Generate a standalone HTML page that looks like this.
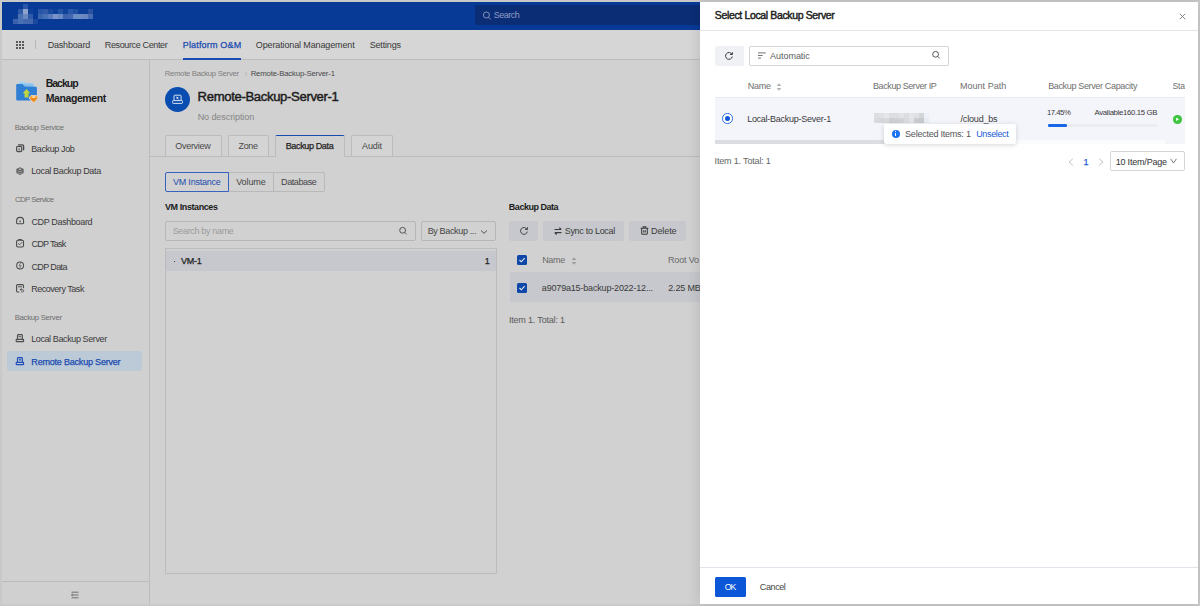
<!DOCTYPE html>
<html lang="en"><head><meta charset="utf-8"><title>Select Local Backup Server</title>
<style>
*{box-sizing:border-box;margin:0;padding:0}
html,body{width:1200px;height:606px;overflow:hidden}
body{background:#c9c9c9;font-family:"Liberation Sans",sans-serif;position:relative}
.a{position:absolute}
.t{position:absolute;white-space:nowrap}
#app{position:absolute;left:2px;top:2px;width:1196px;height:602px;overflow:hidden;background:#d1d1d1}
/* coordinates inside #app are offset by -2; we instead use a wrapper shifted back */
#page{position:absolute;left:0;top:0;width:1200px;height:606px}
#topbar{left:2px;top:2px;width:1196px;height:28px;background:#063a96}
#tsearch{left:475px;top:5px;width:240px;height:19.5px;background:#0a2d76;border-radius:2px}
#nav{left:2px;top:30px;width:1196px;height:30px;background:#d6d6d6;border-bottom:1px solid #bdbdbd}
#side{left:2px;top:60px;width:148px;height:544px;background:#d0d0d0;border-right:1px solid #bcbcbc}
#sidefoot{left:2px;top:581px;width:147px;height:1px;background:#bcbcbc}
#sel{left:7.4px;top:351.3px;width:135px;height:20px;background:#bccad7;border-radius:2px}
.tab{border:1px solid #bcbcbc;border-bottom:none;background:#d4d4d4;border-radius:2px 2px 0 0;top:135px;height:21px}
#modal{left:700px;top:2px;width:498px;height:602px;background:#fff;box-shadow:-2px 0 12px rgba(0,0,0,0.11)}
.btn{background:#c6c8cd;border-radius:2px}
.cb{width:10px;height:10px;background:#0f47a8;border-radius:1.5px}

</style></head>
<body>
<div id="page">
<!-- ===== underlying (dimmed) page ===== -->
<div class="a" id="topbar"></div>
<svg class="a" style="left:13px;top:4px" width="85" height="20" viewBox="0 0 85 20" shape-rendering="crispEdges">
<rect x="10" y="0" width="5" height="5" fill="#2a56a8"/><rect x="5" y="5" width="5" height="5" fill="#2f5aa8"/><rect x="10" y="5" width="5" height="5" fill="#8ea3cc"/><rect x="15" y="5" width="5" height="5" fill="#0f409a"/><rect x="0" y="10" width="5" height="5" fill="#0a3c96"/><rect x="5" y="10" width="5" height="5" fill="#4a70b4"/><rect x="10" y="10" width="5" height="5" fill="#6a88c0"/><rect x="15" y="10" width="5" height="5" fill="#2f5aa8"/><rect x="0" y="15" width="5" height="5" fill="#3a62ae"/><rect x="5" y="15" width="5" height="5" fill="#4a70b4"/><rect x="10" y="15" width="5" height="5" fill="#4468b0"/><rect x="15" y="15" width="5" height="5" fill="#4468b0"/><rect x="20" y="15" width="5" height="5" fill="#1a489e"/><rect x="25" y="5" width="5" height="5" fill="#2756a6"/><rect x="30" y="5" width="5" height="5" fill="#305aa8"/><rect x="35" y="5" width="5" height="5" fill="#1a4aa0"/><rect x="40" y="5" width="5" height="5" fill="#0d3f99"/><rect x="45" y="5" width="5" height="5" fill="#2253a4"/><rect x="50" y="5" width="5" height="5" fill="#0f409a"/><rect x="55" y="5" width="5" height="5" fill="#2a58a8"/><rect x="60" y="5" width="5" height="5" fill="#2050a2"/><rect x="65" y="5" width="5" height="5" fill="#0d3f98"/><rect x="70" y="5" width="5" height="5" fill="#0d3f98"/><rect x="75" y="5" width="5" height="5" fill="#2a50a0"/><rect x="25" y="10" width="5" height="5" fill="#3a66b0"/><rect x="30" y="10" width="5" height="5" fill="#4870b4"/><rect x="35" y="10" width="5" height="5" fill="#5a7cbc"/><rect x="40" y="10" width="5" height="5" fill="#7a94c8"/><rect x="45" y="10" width="5" height="5" fill="#6a88c2"/><rect x="50" y="10" width="5" height="5" fill="#3a62ae"/><rect x="55" y="10" width="5" height="5" fill="#4068b0"/><rect x="60" y="10" width="5" height="5" fill="#6a8cc2"/><rect x="65" y="10" width="5" height="5" fill="#6c8cc4"/><rect x="70" y="10" width="5" height="5" fill="#6a86c0"/><rect x="75" y="10" width="5" height="5" fill="#4a6cb4"/>
</svg>
<div class="a" id="tsearch"></div>
<svg class="a" style="left:482px;top:11px" width="10" height="10" viewBox="0 0 10 10" fill="none" stroke="#8f9dc4" stroke-width="0.9"><circle cx="4.4" cy="4" r="3"/><path d="M6.6 6.3 L8.8 8.5"/></svg>

<div class="a" id="nav"></div>
<svg class="a" style="left:16px;top:41px" width="8" height="8" viewBox="0 0 8 8" fill="#5a5a5a" shape-rendering="crispEdges"><rect x="0" y="0" width="2" height="2"/><rect x="3" y="0" width="2" height="2"/><rect x="6" y="0" width="2" height="2"/><rect x="0" y="3" width="2" height="2"/><rect x="3" y="3" width="2" height="2"/><rect x="6" y="3" width="2" height="2"/><rect x="0" y="6" width="2" height="2"/><rect x="3" y="6" width="2" height="2"/><rect x="6" y="6" width="2" height="2"/></svg>
<div class="a" style="left:35px;top:40px;width:1px;height:9px;background:#b8b8b8"></div>
<div class="a" style="left:183px;top:58.1px;width:58px;height:1.6px;background:#1a4db4"></div>

<div class="a" style="left:150px;top:60px;width:1048px;height:544px;background:#d1d1d1"></div>
<div class="a" id="side"></div>
<div class="a" id="sidefoot"></div>
<div class="a" id="sel"></div>
<!-- folder icon -->
<svg class="a" style="left:14px;top:79px" width="26" height="26" viewBox="14 79 26 26">
<defs><linearGradient id="fb" x1="0" y1="0" x2="0" y2="1"><stop offset="0" stop-color="#b4daf2"/><stop offset="1" stop-color="#62aae4"/></linearGradient><linearGradient id="ar" x1="0" y1="0" x2="1" y2="0"><stop offset="0" stop-color="#d8de3e"/><stop offset="1" stop-color="#a4c83e"/></linearGradient></defs>
<path d="M19 82.2 Q19 81.2 20 81.2 H24.2 L26 83 H32.6 Q33.6 83 33.6 84 V88.5 H19 Z" fill="url(#fb)"/>
<path d="M16.2 85 Q16.2 84 17.2 84 H22.4 L25 86.8 H36 Q36.9 86.8 36.9 87.8 V99.5 Q36.9 100.5 35.9 100.5 H17.2 Q16.2 100.5 16.2 99.5 Z" fill="#2f7fd5"/>
<path d="M26.6 88.9 L30.4 93.2 H28.6 V97.6 H24.6 V93.2 H22.8 Z" fill="url(#ar)"/>
<path d="M31 95.5 H36.3 L38.3 98 L33.65 103 L29 98 Z" fill="#ee8a1c" stroke="#ece2d6" stroke-width="0.9"/>
<path d="M31.1 95.7 H36.2 L38 98 H29.3 Z" fill="#f5a840"/>
<ellipse cx="33.65" cy="97.1" rx="1.7" ry="0.8" fill="#fdeacc"/>
</svg>
<svg class="a" style="left:0;top:0" width="150" height="606" viewBox="0 0 150 606" fill="none" stroke="#4c4c4c" stroke-linecap="round" stroke-linejoin="round">
<g stroke-width="1.2"><rect x="16.6" y="146.4" width="5.2" height="5.2" rx="1.3"/><path d="M18.7 144.9 H22.4 Q23.6 144.9 23.6 146.1 V149.8" stroke-width="1.4"/><path d="M19.2 148.1 V149.7 M18.4 149.8 H20" stroke-width="0.6"/></g>
<g><path d="M20 167.2 L23.6 169 V173 L20 174.9 L16.4 173 V169 Z" fill="#565656" stroke="none"/><path d="M20 168.3 L22.1 169.3 L20 170.3 L17.9 169.3 Z" fill="#d0d0d0" stroke="none" opacity="0.75"/><path d="M17.7 171 Q20 172.4 22.3 171 M17.7 172.9 Q20 174.2 22.3 172.9" stroke="#d0d0d0" stroke-width="0.7" opacity="0.85"/></g>
<g stroke-width="1.1"><path d="M16.6 223.1 V220.9 A3.5 3.5 0 0 1 23.6 220.9 V223.1 Q23.6 223.7 23 223.7 H17.2 Q16.6 223.7 16.6 223.1 Z"/><circle cx="20.1" cy="221.4" r="0.8" fill="#4c4c4c" stroke="none"/></g>
<g stroke-width="1.1"><rect x="16.6" y="240.3" width="6.9" height="6.7" rx="1.2"/><path d="M18.6 240.2 V239.5 H21.5 V240.2" stroke-width="1"/><path d="M18.3 243.6 L19.6 244.8 L21.8 242.5" stroke-width="0.9"/></g>
<g stroke-width="1.05"><circle cx="20.1" cy="265.55" r="3.45"/><path d="M20.6 263.2 L19 265.7 H21.2 L19.6 268" stroke-width="0.7"/></g>
<g stroke-width="1.1"><path d="M23.5 287.6 V285.7 Q23.5 284.6 22.4 284.6 H17.7 Q16.6 284.6 16.6 285.7 V290.9 Q16.6 292 17.7 292 H19"/><path d="M18.4 286.8 H21.7" stroke-width="0.9"/><path d="M20.3 289.6 H22.6 Q23.7 289.6 23.7 290.7 Q23.7 291.9 22.6 291.9 H21.6 M21.4 288.5 L20.2 289.6 L21.4 290.7" stroke-width="0.85"/></g>
<g stroke="#4c4c4c" fill="none" stroke-width="1.15"><path d="M17.5 339.3 V335.4 Q17.5 334.6 18.3 334.6 H21.5 Q22.3 334.6 22.3 335.4 V339.3"/><rect x="16.2" y="339.3" width="7.4" height="2.3" rx="0.7"/><path d="M19 336.7 H20.8" stroke-width="0.9"/></g>
<g stroke="#1a4bb8" fill="none" stroke-width="1.15"><path d="M17.5 362.3 V358.4 Q17.5 357.6 18.3 357.6 H21.5 Q22.3 357.6 22.3 358.4 V362.3"/><rect x="16.2" y="362.3" width="7.4" height="2.3" rx="0.7"/><rect x="19.1" y="358.9" width="1.7" height="1.7" fill="#1a4bb8" stroke="none"/></g>
</svg>
<!-- collapse icon -->
<svg class="a" style="left:71px;top:591px" width="8" height="8" viewBox="0 0 8 8" stroke="#666" stroke-width="0.9" fill="none"><path d="M0.5 1.2 H7.5 M0.5 4 H7.5 M0.5 6.8 H7.5 M1.8 2.9 L0.5 4 L1.8 5.1"/></svg>

<!-- main content -->
<svg class="a" style="left:243.5px;top:70.5px" width="4" height="6" viewBox="0 0 4 6" fill="none" stroke="#adadad" stroke-width="0.7"><path d="M1 0.8 L3 3 L1 5.2"/></svg>
<div class="a" style="left:165px;top:86.5px;width:25px;height:25px;border-radius:50%;background:#0a4db0"></div>
<svg class="a" style="left:170px;top:92px" width="16" height="14" viewBox="170 92 16 14" fill="none" stroke="#d6e0f2" stroke-width="1" stroke-linejoin="round"><path d="M174 100.6 V96 Q174 95.2 174.8 95.2 H180.3 Q181.1 95.2 181.1 96 V100.6"/><rect x="172.6" y="100.6" width="9.9" height="2.8" rx="0.7"/><path d="M176.3 96.6 L179 97.6 L177.9 98.1 L178.9 99.4 L178.3 99.8 L177.3 98.5 L176.6 99.3 Z" fill="#d6e0f2" stroke="none"/></svg>

<div class="a" style="left:150px;top:156px;width:550px;height:1px;background:#bcbcbc"></div>
<div class="a tab" style="left:165px;width:57px"></div>
<div class="a tab" style="left:228px;width:40.5px"></div>
<div class="a tab" style="left:351px;width:41.5px"></div>
<div class="a" style="left:275px;top:135px;width:70px;height:22px;background:#d1d1d1;border:1px solid #bcbcbc;border-bottom:none;border-top:1.6px solid #174bb0;border-radius:2px 2px 0 0"></div>

<!-- segmented -->
<div class="a" style="left:229px;top:172px;width:96px;height:20px;border:1px solid #b9b9b9;border-left:none;border-radius:0 2px 2px 0"></div>
<div class="a" style="left:273px;top:172px;width:1px;height:20px;background:#b9b9b9"></div>
<div class="a" style="left:165px;top:172px;width:64px;height:20px;border:1px solid #3763bd;border-radius:2px 0 0 2px"></div>

<!-- VM instances -->
<div class="a" style="left:165px;top:221px;width:251px;height:20px;border:1px solid #b6b6b6;border-radius:2px"></div>
<svg class="a" style="left:398px;top:226px" width="10" height="10" viewBox="0 0 10 10" fill="none" stroke="#444" stroke-width="0.9"><circle cx="4.6" cy="4.3" r="2.9"/><path d="M6.7 6.4 L8.6 8.3"/></svg>
<div class="a" style="left:420.5px;top:221px;width:75.5px;height:20px;border:1px solid #b6b6b6;border-radius:2px"></div>
<svg class="a" style="left:480px;top:228.5px" width="8" height="6" viewBox="0 0 8 6" fill="none" stroke="#444" stroke-width="0.9"><path d="M1 1.5 L4 4.3 L7 1.5"/></svg>
<div class="a" style="left:165px;top:248px;width:332px;height:326px;border:1px solid #bcbcbc"></div>
<div class="a" style="left:166px;top:251px;width:330px;height:20.3px;background:#c6c8cd"></div>
<div class="a" style="left:173.5px;top:260.5px;width:1.2px;height:1.2px;background:#444"></div>

<!-- backup data -->
<div class="a btn" style="left:509.3px;top:221px;width:28.6px;height:19.6px"></div>
<svg class="a" style="left:519px;top:226px" width="10" height="10" viewBox="0 0 10 10" fill="none" stroke="#3a3a3a" stroke-width="0.95"><path d="M7.9 3.2 A3.4 3.4 0 1 0 8.3 5.6"/><path d="M8.4 1.2 V3.5 H6.1" stroke-linejoin="miter"/></svg>
<div class="a btn" style="left:543px;top:221px;width:80.8px;height:19.6px"></div>
<svg class="a" style="left:553.5px;top:226.5px" width="8" height="8" viewBox="0 0 8 8" fill="none" stroke="#3a3a3a" stroke-width="1.1"><path d="M0.5 2.5 H7.3 M5.3 0.6 L7.3 2.5 M7.5 5.6 H0.7 M2.7 7.5 L0.7 5.6"/></svg>
<div class="a btn" style="left:629.3px;top:221px;width:56.3px;height:19.6px"></div>
<svg class="a" style="left:639.5px;top:226px" width="9" height="9" viewBox="0 0 9 9" fill="none" stroke="#3a3a3a" stroke-width="1.05"><path d="M0.6 2.3 H8.4 M3.2 2.2 V0.8 H5.8 V2.2 M1.7 2.5 V7.4 Q1.7 8.3 2.6 8.3 H6.4 Q7.3 8.3 7.3 7.4 V2.5 M3.7 4.2 V6.5 M5.3 4.2 V6.5"/></svg>

<div class="a" style="left:509.5px;top:272.3px;width:191px;height:30.2px;background:#c6c8cd"></div>
<div class="a cb" style="left:517.3px;top:255.3px"></div>
<div class="a cb" style="left:517.3px;top:282.8px"></div>
<svg class="a" style="left:517.3px;top:255.3px" width="10" height="10" viewBox="0 0 10 10" fill="none" stroke="#e4e9f4" stroke-width="1.1"><path d="M2.5 5 L4.3 6.8 L7.6 3.2"/></svg>
<svg class="a" style="left:517.3px;top:282.8px" width="10" height="10" viewBox="0 0 10 10" fill="none" stroke="#e4e9f4" stroke-width="1.1"><path d="M2.5 5 L4.3 6.8 L7.6 3.2"/></svg>
<svg class="a" style="left:570.5px;top:257px" width="6" height="8" viewBox="0 0 6 8"><path d="M3 0.3 L5.3 3 H0.7 Z" fill="#9a9a9a"/><path d="M3 7.7 L5.3 5 H0.7 Z" fill="#9a9a9a"/></svg>

<span class="t" style="left:47.65px;top:39px;font-size:9.03px;line-height:13px;letter-spacing:-0.185px;color:#383838;">Dashboard</span>
<span class="t" style="left:104.74px;top:39px;font-size:9.03px;line-height:13px;letter-spacing:-0.367px;color:#383838;">Resource Center</span>
<span class="t" style="left:182.72px;top:39px;font-size:9.03px;line-height:13px;letter-spacing:0.165px;color:#1a4bb0;-webkit-text-stroke:0.25px currentColor;">Platform O&amp;M</span>
<span class="t" style="left:255.83px;top:39px;font-size:9.03px;line-height:13px;letter-spacing:-0.139px;color:#383838;">Operational Management</span>
<span class="t" style="left:369.66px;top:39px;font-size:9.03px;line-height:13px;letter-spacing:-0.165px;color:#383838;">Settings</span>
<span class="t" style="left:164.66px;top:68px;font-size:7.77px;line-height:11px;letter-spacing:-0.310px;color:#808080;">Remote Backup Server</span>
<span class="t" style="left:250.66px;top:68px;font-size:7.77px;line-height:11px;letter-spacing:-0.176px;color:#4a4a4a;">Remote-Backup-Server-1</span>
<span class="t" style="left:197.58px;top:88px;font-size:13.12px;line-height:18px;letter-spacing:-0.349px;color:#1c1c1c;-webkit-text-stroke:0.45px currentColor;">Remote-Backup-Server-1</span>
<span class="t" style="left:197.65px;top:111px;font-size:9.03px;line-height:13px;letter-spacing:-0.080px;color:#858585;">No description</span>
<span class="t" style="left:175.31px;top:140px;font-size:9.03px;line-height:13px;letter-spacing:-0.314px;color:#484848;">Overview</span>
<span class="t" style="left:238.45px;top:140px;font-size:9.03px;line-height:13px;letter-spacing:-0.299px;color:#484848;">Zone</span>
<span class="t" style="left:285.72px;top:140px;font-size:9.03px;line-height:13px;letter-spacing:-0.369px;color:#222;-webkit-text-stroke:0.25px currentColor;">Backup Data</span>
<span class="t" style="left:362.00px;top:140px;font-size:9.03px;line-height:13px;letter-spacing:-0.135px;color:#484848;">Audit</span>
<span class="t" style="left:173.06px;top:176px;font-size:9.03px;line-height:13px;letter-spacing:-0.236px;color:#1a4bb0;">VM Instance</span>
<span class="t" style="left:236.17px;top:176px;font-size:9.03px;line-height:13px;letter-spacing:-0.085px;color:#444;">Volume</span>
<span class="t" style="left:281.03px;top:176px;font-size:9.03px;line-height:13px;letter-spacing:-0.401px;color:#444;">Database</span>
<span class="t" style="left:164.98px;top:201px;font-size:9.03px;line-height:13px;letter-spacing:-0.426px;color:#1c1c1c;font-weight:700;">VM Instances</span>
<span class="t" style="left:172.66px;top:225px;font-size:9.03px;line-height:13px;letter-spacing:-0.344px;color:#9c9c9c;">Search by name</span>
<span class="t" style="left:427.65px;top:225px;font-size:9.03px;line-height:13px;letter-spacing:-0.355px;color:#444;">By Backup ...</span>
<span class="t" style="left:180.99px;top:255px;font-size:9.03px;line-height:13px;letter-spacing:-0.267px;color:#222;-webkit-text-stroke:0.25px currentColor;">VM-1</span>
<span class="t" style="left:484.85px;top:255px;font-size:9.03px;line-height:13px;letter-spacing:-1.116px;color:#222;-webkit-text-stroke:0.25px currentColor;">1</span>
<span class="t" style="left:508.83px;top:201px;font-size:9.03px;line-height:13px;letter-spacing:-0.486px;color:#1c1c1c;font-weight:700;">Backup Data</span>
<span class="t" style="left:564.66px;top:225px;font-size:9.03px;line-height:13px;letter-spacing:-0.290px;color:#3a3a3a;">Sync to Local</span>
<span class="t" style="left:651.03px;top:225px;font-size:9.03px;line-height:13px;letter-spacing:-0.090px;color:#3a3a3a;">Delete</span>
<span class="t" style="left:542.15px;top:254px;font-size:9.03px;line-height:13px;letter-spacing:-0.338px;color:#6a6a6a;">Name</span>
<span class="t" style="left:668.03px;top:254px;font-size:9.03px;line-height:13px;letter-spacing:-0.170px;color:#6a6a6a;z-index:0;">Root Vo</span>
<span class="t" style="left:541.80px;top:282px;font-size:9.03px;line-height:13px;letter-spacing:-0.182px;color:#3a3a3a;">a9079a15-backup-2022-12...</span>
<span class="t" style="left:668.25px;top:282px;font-size:9.03px;line-height:13px;letter-spacing:-0.160px;color:#3a3a3a;">2.25 MB</span>
<span class="t" style="left:508.88px;top:314px;font-size:9.03px;line-height:13px;letter-spacing:-0.183px;color:#5a5a5a;">Item 1. Total: 1</span>
<span class="t" style="left:45.66px;top:76px;font-size:10.5px;line-height:15px;letter-spacing:-1.004px;color:#1c1c1c;font-weight:700;">Backup</span>
<span class="t" style="left:45.66px;top:91px;font-size:10.5px;line-height:15px;letter-spacing:-0.404px;color:#1c1c1c;font-weight:700;">Management</span>
<span class="t" style="left:14.66px;top:122px;font-size:7.77px;line-height:11px;letter-spacing:-0.343px;color:#6e6e6e;">Backup Service</span>
<span class="t" style="left:31.17px;top:143px;font-size:9.03px;line-height:13px;letter-spacing:-0.385px;color:#3a3a3a;">Backup Job</span>
<span class="t" style="left:31.17px;top:165px;font-size:9.03px;line-height:13px;letter-spacing:-0.353px;color:#3a3a3a;">Local Backup Data</span>
<span class="t" style="left:14.88px;top:194px;font-size:7.77px;line-height:11px;letter-spacing:-0.518px;color:#6e6e6e;">CDP Service</span>
<span class="t" style="left:31.42px;top:216px;font-size:9.03px;line-height:13px;letter-spacing:-0.360px;color:#3a3a3a;">CDP Dashboard</span>
<span class="t" style="left:31.42px;top:238px;font-size:9.03px;line-height:13px;letter-spacing:-0.682px;color:#3a3a3a;">CDP Task</span>
<span class="t" style="left:31.42px;top:261px;font-size:9.03px;line-height:13px;letter-spacing:-0.619px;color:#3a3a3a;">CDP Data</span>
<span class="t" style="left:31.17px;top:283px;font-size:9.03px;line-height:13px;letter-spacing:-0.476px;color:#3a3a3a;">Recovery Task</span>
<span class="t" style="left:14.66px;top:312px;font-size:7.77px;line-height:11px;letter-spacing:-0.298px;color:#6e6e6e;">Backup Server</span>
<span class="t" style="left:31.17px;top:333px;font-size:9.03px;line-height:13px;letter-spacing:-0.398px;color:#3a3a3a;">Local Backup Server</span>
<span class="t" style="left:31.34px;top:356px;font-size:9.03px;line-height:13px;letter-spacing:-0.207px;color:#1a4bb0;-webkit-text-stroke:0.25px currentColor;">Remote Backup Server</span>
<span class="t" style="left:493.66px;top:9px;font-size:9.03px;line-height:13px;letter-spacing:-0.500px;color:#8f9dc4;">Search</span>
<span class="t" style="left:701.5px;top:256px;font-size:9px;line-height:12px;color:#6a6a6a">lume Size</span>

<!-- ===== drawer ===== -->
<div class="a" id="modal"></div>
<div class="a" style="left:700px;top:30px;width:498px;height:1px;background:#e4e5ea"></div>
<svg class="a" style="left:1179px;top:13px" width="7" height="7" viewBox="0 0 7 7" stroke="#666" stroke-width="0.8"><path d="M0.8 0.8 L6.2 6.2 M6.2 0.8 L0.8 6.2"/></svg>
<div class="a" style="left:715px;top:45.6px;width:28.8px;height:20.1px;background:#f0f1f5;border-radius:2px"></div>
<svg class="a" style="left:724px;top:50.5px" width="10" height="10" viewBox="0 0 10 10" fill="none" stroke="#333" stroke-width="0.95"><path d="M7.9 3.2 A3.4 3.4 0 1 0 8.3 5.6"/><path d="M8.4 1.2 V3.5 H6.1"/></svg>
<div class="a" style="left:748.6px;top:45.6px;width:200.4px;height:20.1px;border:1px solid #d4d4da;border-radius:2px"></div>
<svg class="a" style="left:758px;top:52px" width="8" height="7" viewBox="0 0 8 7" stroke="#666" stroke-width="0.9"><path d="M0 0.9 H7.8 M0 3.5 H4.6 M0 6.1 H3"/></svg>
<svg class="a" style="left:930.5px;top:50px" width="10" height="10" viewBox="0 0 10 10" fill="none" stroke="#444" stroke-width="0.9"><circle cx="4.6" cy="4.3" r="2.9"/><path d="M6.7 6.4 L8.6 8.3"/></svg>
<svg class="a" style="left:776.3px;top:83px" width="6" height="8" viewBox="0 0 6 8"><path d="M3 0.3 L5.3 3 H0.7 Z" fill="#b0b0b0"/><path d="M3 7.7 L5.3 5 H0.7 Z" fill="#b0b0b0"/></svg>
<div class="a" style="left:1173px;top:80px;width:12px;height:14px;overflow:hidden"><span class="t" style="left:-0.5px;top:0.27px;font-size:8.6px;line-height:12px;letter-spacing:-0.15px;color:#6e6e6e">Status</span></div>

<div class="a" style="left:715px;top:97px;width:470px;height:47px;background:#f4f5fa;border-top:1px solid #e9eaf0"></div>
<div class="a" style="left:715px;top:140.2px;width:450px;height:3.8px;background:#fafbfd"></div>
<div class="a" style="left:715px;top:140.2px;width:200px;height:3.6px;background:#dcdde1;border-radius:0 0 0 1px"></div>
<div class="a" style="left:722.3px;top:113.4px;width:10.5px;height:10.5px;border-radius:50%;border:1px solid #2a6ee6;background:#fff"></div>
<div class="a" style="left:725px;top:116.1px;width:5.1px;height:5.1px;border-radius:50%;background:#0f55d8"></div>
<svg class="a" style="left:873px;top:113px" width="57" height="10" viewBox="0 0 57 10" shape-rendering="crispEdges">
<rect x="1" y="0" width="5" height="5" fill="#dcdde0"/><rect x="6" y="0" width="5" height="5" fill="#e0e1e4"/><rect x="11" y="0" width="5" height="5" fill="#e4e6e8"/><rect x="16" y="0" width="5" height="5" fill="#dcdde0"/><rect x="21" y="0" width="5" height="5" fill="#dddee1"/><rect x="26" y="0" width="5" height="5" fill="#e2e3e6"/><rect x="31" y="0" width="5" height="5" fill="#dcdde0"/><rect x="36" y="0" width="5" height="5" fill="#e4e5e8"/><rect x="41" y="0" width="5" height="5" fill="#e0e1e4"/><rect x="46" y="0" width="5" height="5" fill="#d4d5d8"/><rect x="51" y="0" width="5" height="5" fill="#eef0f7"/><rect x="1" y="5" width="5" height="4.7" fill="#d9dadd"/><rect x="6" y="5" width="5" height="4.7" fill="#d4d5d8"/><rect x="11" y="5" width="5" height="4.7" fill="#d8d9dc"/><rect x="16" y="5" width="5" height="4.7" fill="#cdced1"/><rect x="21" y="5" width="5" height="4.7" fill="#cfd0d3"/><rect x="26" y="5" width="5" height="4.7" fill="#d2d3d6"/><rect x="31" y="5" width="5" height="4.7" fill="#dadbde"/><rect x="36" y="5" width="5" height="4.7" fill="#e2e3e6"/><rect x="41" y="5" width="5" height="4.7" fill="#cccdd0"/><rect x="46" y="5" width="5" height="4.7" fill="#c8c9cc"/><rect x="51" y="5" width="5" height="4.7" fill="#e8ecf5"/>
</svg>
<div class="a" style="left:1048px;top:124.3px;width:109px;height:2.4px;background:#ebecf1;border-radius:1.2px"></div>
<div class="a" style="left:1048px;top:124.3px;width:19px;height:2.4px;background:#1766e6;border-radius:1.2px"></div>
<div class="a" style="left:1173.3px;top:115.2px;width:8.4px;height:8.4px;border-radius:50%;background:#3fc53f"></div>
<svg class="a" style="left:1173.3px;top:115.2px" width="8.4" height="8.4" viewBox="0 0 8.4 8.4"><path d="M3.2 2.4 L6 4.2 L3.2 6 Z" fill="#fff"/></svg>

<div class="a" style="left:883.8px;top:124.3px;width:132.4px;height:19.3px;background:#fff;border-radius:2px;box-shadow:0 1px 5px rgba(0,0,0,0.16)"></div>
<div class="a" style="left:891.7px;top:129.7px;width:8.2px;height:8.2px;border-radius:50%;background:#1a73f2"></div>
<div class="a" style="left:895.3px;top:131.4px;width:1px;height:1px;background:#fff"></div>
<div class="a" style="left:895.3px;top:133.1px;width:1px;height:3.1px;background:#fff"></div>

<svg class="a" style="left:1068px;top:158px" width="6" height="8" viewBox="0 0 6 8" fill="none" stroke="#b5b5b5" stroke-width="0.8"><path d="M4.8 0.8 L1 4 L4.8 7.2"/></svg>
<svg class="a" style="left:1098px;top:158px" width="6" height="8" viewBox="0 0 6 8" fill="none" stroke="#b5b5b5" stroke-width="0.8"><path d="M1.2 0.8 L5 4 L1.2 7.2"/></svg>
<div class="a" style="left:1110.4px;top:151.3px;width:74.6px;height:20px;border:1px solid #d4d4da;border-radius:2px"></div>
<svg class="a" style="left:1170px;top:157.6px" width="7" height="6" viewBox="0 0 7 6" fill="none" stroke="#555" stroke-width="0.8"><path d="M0.6 0.8 L3.5 5 L6.4 0.8"/></svg>

<div class="a" style="left:700px;top:567.3px;width:498px;height:1px;background:#e2e3ea"></div>
<div class="a" style="left:715px;top:577.2px;width:30.8px;height:19.8px;background:#0b57d8;border-radius:1.5px"></div>
<span class="t" style="left:714.86px;top:8px;font-size:10.5px;line-height:15px;letter-spacing:-0.362px;color:#222;-webkit-text-stroke:0.45px currentColor;">Select Local Backup Server</span>
<span class="t" style="left:770.00px;top:50px;font-size:9.03px;line-height:13px;letter-spacing:-0.036px;color:#5e5e5e;">Automatic</span>
<span class="t" style="left:747.65px;top:80px;font-size:9.03px;line-height:13px;letter-spacing:-0.250px;color:#6e6e6e;">Name</span>
<span class="t" style="left:873.03px;top:80px;font-size:9.03px;line-height:13px;letter-spacing:-0.419px;color:#6e6e6e;">Backup Server IP</span>
<span class="t" style="left:960.03px;top:80px;font-size:9.03px;line-height:13px;letter-spacing:0.011px;color:#6e6e6e;">Mount Path</span>
<span class="t" style="left:1048.15px;top:80px;font-size:9.03px;line-height:13px;letter-spacing:-0.354px;color:#6e6e6e;">Backup Server Capacity</span>
<span class="t" style="left:747.15px;top:113px;font-size:9.03px;line-height:13px;letter-spacing:-0.272px;color:#3a3a3a;">Local-Backup-Sever-1</span>
<span class="t" style="left:960.52px;top:113px;font-size:9.03px;line-height:13px;letter-spacing:-0.186px;color:#3a3a3a;">/cloud_bs</span>
<span class="t" style="left:1046.91px;top:107px;font-size:7.77px;line-height:11px;letter-spacing:-0.490px;color:#3a3a3a;">17.45%</span>
<span class="t" style="left:1094.62px;top:107px;font-size:7.77px;line-height:11px;letter-spacing:-0.333px;color:#3a3a3a;">Avaliable160.15 GB</span>
<span class="t" style="left:905.09px;top:128px;font-size:9.03px;line-height:13px;letter-spacing:-0.239px;color:#555;">Selected Items: 1</span>
<span class="t" style="left:976.20px;top:128px;font-size:9.03px;line-height:13px;letter-spacing:-0.360px;color:#1a5cd6;">Unselect</span>
<span class="t" style="left:714.58px;top:155px;font-size:9.03px;line-height:13px;letter-spacing:-0.177px;color:#666;">Item 1. Total: 1</span>
<span class="t" style="left:1083.39px;top:156px;font-size:9.03px;line-height:13px;letter-spacing:0.084px;color:#1a5cd6;-webkit-text-stroke:0.25px currentColor;">1</span>
<span class="t" style="left:1115.65px;top:156px;font-size:9.03px;line-height:13px;letter-spacing:-0.195px;color:#333;">10 Item/Page</span>
<span class="t" style="left:724.82px;top:581px;font-size:8.61px;line-height:12px;letter-spacing:-1.028px;color:#fff;">OK</span>
<span class="t" style="left:759.83px;top:581px;font-size:9.03px;line-height:13px;letter-spacing:-0.412px;color:#444;">Cancel</span>
</div>

</body></html>
